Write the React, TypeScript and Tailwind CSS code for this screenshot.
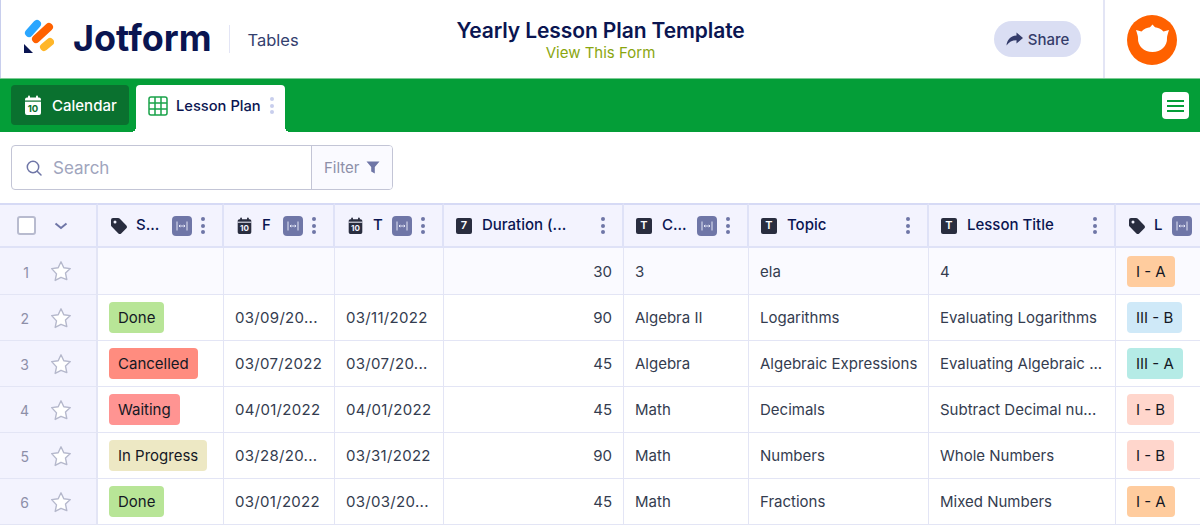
import React from 'react';

const font = '[font-family:Inter,"Liberation_Sans",sans-serif]';

function TableIcon() {
  return (
    <svg width="20" height="20" viewBox="0 0 20 20" fill="#fff" stroke="#1aa34a" strokeWidth="1.5">
      <rect x="1" y="1" width="18" height="18" rx="2" />
      <path d="M1 7h18M1 13h18M7 1v18M13 1v18" />
    </svg>
  );
}

function CalIcon({ size, bg, fg }: { size: number; bg: string; fg: string }) {
  return (
    <svg width={size} height={size} viewBox="0 0 20 20">
      <path d="M2 4.500a2 2 0 0 1 2-2h12a2 2 0 0 1 2 2V18a2 2 0 0 1-2 2H4a2 2 0 0 1-2-2z" fill={bg} />
      <rect x="5" y="0.500" width="2" height="4" rx="1" fill={bg} />
      <rect x="13" y="0.500" width="2" height="4" rx="1" fill={bg} />
      <rect x="2" y="5.500" width="16" height="1.200" fill={fg} />
      <text x="10" y="17" textAnchor="middle" fontSize="9.500" fontWeight="700" fontFamily="Inter, sans-serif" fill={fg}>10</text>
    </svg>
  );
}

function TagIcon() {
  return (
    <svg width="18" height="18" viewBox="0 0 18 18">
      <path d="M1 3a2 2 0 0 1 2-2h5.200a2 2 0 0 1 1.400.6l6.800 6.800a2 2 0 0 1 0 2.800l-5.200 5.200a2 2 0 0 1-2.800 0L1.600 9.600A2 2 0 0 1 1 8.200z" fill="#292d3f" />
      <circle cx="5" cy="5" r="1.500" fill="#f3f3fe" />
    </svg>
  );
}

function TypeIcon({ label }: { label: string }) {
  return (
    <span className="flex h-[16px] w-[16px] shrink-0 items-center justify-center rounded-[2px] bg-[#292d3f] text-[11px] font-semibold leading-none text-white">
      {label}
    </span>
  );
}

function Fit() {
  return (
    <span className="flex h-5 w-5 shrink-0 items-center justify-center rounded-[4px] bg-[#6f76a7]">
      <svg width="12" height="10" viewBox="0 0 12 10" fill="none" stroke="#e3e5f5" strokeWidth="1">
        <path d="M1 0.500v9M11 0.500v9M3.200 5h5.600" />
        <path d="M4.200 3.800 3 5l1.200 1.200M7.800 3.800 9 5 7.800 6.200" />
      </svg>
    </span>
  );
}

function Dots({ color = 'bg-[#6f76a7]' }: { color?: string }) {
  return (
    <span className="flex shrink-0 flex-col gap-[2.5px]">
      <i className={`h-1 w-1 rounded-full ${color}`} />
      <i className={`h-1 w-1 rounded-full ${color}`} />
      <i className={`h-1 w-1 rounded-full ${color}`} />
    </span>
  );
}

function Star() {
  return (
    <svg width="22" height="22" viewBox="0 0 22 22" fill="#fff" stroke="#b5b8cc" strokeWidth="1.4" strokeLinejoin="round">
      <path d="M11 1.800l2.800 6 6.500.8-4.800 4.500 1.300 6.500L11 17.300l-5.800 3.100 1.300-6.500L1.700 8.600l6.500-.8z" />
    </svg>
  );
}

const heads = [
  { icon: <TagIcon />, label: 'S...', fit: true },
  { icon: <CalIcon size={17} bg="#292d3f" fg="#f3f3fe" />, label: 'F', fit: true },
  { icon: <CalIcon size={17} bg="#292d3f" fg="#f3f3fe" />, label: 'T', fit: true },
  { icon: <TypeIcon label="7" />, label: 'Duration (...', fit: false },
  { icon: <TypeIcon label="T" />, label: 'C...', fit: true },
  { icon: <TypeIcon label="T" />, label: 'Topic', fit: false },
  { icon: <TypeIcon label="T" />, label: 'Lesson Title', fit: false },
  { icon: <TagIcon />, label: 'L', fit: true },
];

type Row = {
  n: number;
  status?: [string, string];
  from: string;
  to: string;
  dur: number;
  course: string;
  topic: string;
  title: string;
  level: [string, string];
};

const rows: Row[] = [
  { n: 1, from: '', to: '', dur: 30, course: '3', topic: 'ela', title: '4', level: ['I - A', 'bg-[#ffcc9e]'] },
  { n: 2, status: ['Done', 'bg-[#b8e597]'], from: '03/09/20...', to: '03/11/2022', dur: 90, course: 'Algebra II', topic: 'Logarithms', title: 'Evaluating Logarithms', level: ['III - B', 'bg-[#cfe9f8]'] },
  { n: 3, status: ['Cancelled', 'bg-[#ff8c7f]'], from: '03/07/2022', to: '03/07/20...', dur: 45, course: 'Algebra', topic: 'Algebraic Expressions', title: 'Evaluating Algebraic ...', level: ['III - A', 'bg-[#b5ebe6]'] },
  { n: 4, status: ['Waiting', 'bg-[#ff9492]'], from: '04/01/2022', to: '04/01/2022', dur: 45, course: 'Math', topic: 'Decimals', title: 'Subtract Decimal nu...', level: ['I - B', 'bg-[#ffd6cc]'] },
  { n: 5, status: ['In Progress', 'bg-[#ede8c4]'], from: '03/28/20...', to: '03/31/2022', dur: 90, course: 'Math', topic: 'Numbers', title: 'Whole Numbers', level: ['I - B', 'bg-[#ffd6cc]'] },
  { n: 6, status: ['Done', 'bg-[#b8e597]'], from: '03/01/2022', to: '03/03/20...', dur: 45, course: 'Math', topic: 'Fractions', title: 'Mixed Numbers', level: ['I - A', 'bg-[#ffcc9e]'] },
];

function Pill({ text, bg }: { text: string; bg: string }) {
  return <span className={`-mt-[2px] rounded-[4px] px-[9px] py-[6px] text-[15px] leading-[19px] whitespace-nowrap text-[#141824] ${bg}`}>{text}</span>;
}

function Cell({ children, className = '' }: { children?: React.ReactNode; className?: string }) {
  return (
    <div className={`flex items-center overflow-hidden border-r border-[#e3e5f5] px-[11px] pt-[2px] whitespace-nowrap ${className}`}>
      {children}
    </div>
  );
}

export default function App() {
  return (
    <div className={`h-[525px] w-[1200px] overflow-hidden bg-white text-[#343c6a] ${font}`}>
      <header className="flex h-[78px] border-l border-[#c8ceed] bg-white">
        <div className="flex w-[320px] items-center pl-[21px]">
          <svg width="32" height="36" viewBox="0 0 32 36" className="-mt-[6px] shrink-0" fill="none" strokeWidth="8" strokeLinecap="round">
            <path d="M7 15 15 6" stroke="#2aa6ff" />
            <path d="M14 21 27 9" stroke="#ff6100" />
            <path d="M22 29 28 24" stroke="#ffb629" />
            <path d="M2 26 11 35H2z" fill="#0a1551" />
          </svg>
          <span className="ml-[19px] pb-[2px] text-[36px] leading-none font-bold text-[#0a1551]">Jotform</span>
          <span className="ml-[17px] h-7 w-px bg-[#e3e5f5]" />
          <span className="ml-[18px] pt-[2px] text-[16.5px] text-[#33406e]">Tables</span>
        </div>
        <div className="flex flex-1 flex-col items-center pt-[17px] pr-[114px]">
          <span className="text-[21px] leading-[27px] font-semibold tracking-[-0.1px] text-[#0a1551]">Yearly Lesson Plan Template</span>
          <span className="text-[15px] leading-[17px] text-[#8aa60f]">View This Form</span>
        </div>
        <div className="flex w-[109px] items-center">
          <button className="flex h-[36px] w-[87px] items-center justify-center gap-[5px] rounded-full bg-[#dadef3] text-[15px] font-medium text-[#343c6a]">
            <svg width="17" height="14" viewBox="0 0 17 14" fill="#343c6a">
              <path d="M10.500 0.500 17 6l-6.500 5.500V8.200C6 8.200 3 9.800 0.500 13.500 1 8.400 4 4 10.500 3.600z" />
            </svg>
            <span className="pt-[2px]">Share</span>
          </button>
        </div>
        <div className="flex w-[97px] items-center justify-center border-l-2 border-[#e3e5f5] pt-[2px] pr-px">
          <svg width="50" height="50" viewBox="0 0 50 50">
            <circle cx="25" cy="25" r="25" fill="#ff6100" />
            <path d="M9 15l5.500 1.500C17 14 20 12.800 23 12.300L25.500 9.500 28 12.300C31 12.800 34 14 36.500 16.500L42 15C41 18 40 21 40 23C40.500 31 34 37 25.500 37C17 37 10.500 31 11 23C11 21 10 18 9 15z" fill="#fff" />
          </svg>
        </div>
      </header>

      <nav className="flex h-[54px] items-end justify-between border-t border-[#7fcb96] bg-[#049e38] pl-[11px] pr-[11px]">
        <div className="flex h-full items-start gap-[7px] pt-[6px]">
          <div className="flex h-[40px] w-[118px] items-center gap-[9px] rounded-[4px] bg-[#0a712f] pl-[12px] text-[15px] font-medium text-white">
            <CalIcon size={20} bg="#fff" fg="#0a712f" />
            <span className="pt-[2px]">Calendar</span>
          </div>
          <div className="relative flex h-[47px] w-[149px] items-center rounded-t-[4px] bg-white pb-[6px] pl-[12px] text-[14.7px] font-medium text-[#0a1551]">
            {/* concave feet at the tab's bottom corners */}
            <span className="absolute bottom-0 -left-[5px] h-[5px] w-[5px] bg-[radial-gradient(circle_at_0_0,#049e38_5px,#fff_5px)]" />
            <span className="absolute -right-[5px] bottom-0 h-[5px] w-[5px] bg-[radial-gradient(circle_at_100%_0,#049e38_5px,#fff_5px)]" />
            <TableIcon />
            <span className="ml-[8px] pt-[2px]">Lesson Plan</span>
            <span className="ml-[9px]"><Dots color="bg-[#c8ceed]" /></span>
          </div>
        </div>
        <button className="mb-[13px] flex h-[27px] w-[27px] flex-col items-center justify-center gap-[3px] rounded-[4px] bg-white">
          <i className="h-[2px] w-[17px] bg-[#049e38]" />
          <i className="h-[2px] w-[17px] bg-[#049e38]" />
          <i className="h-[2px] w-[17px] bg-[#049e38]" />
        </button>
      </nav>

      <div className="flex h-[71px] items-start pt-[13px] pl-[11px]">
        <div className="flex h-[45px] w-[382px] overflow-hidden rounded-[4px] border border-[#c3c5d6]">
          <div className="flex w-[299px] items-center gap-[11px] pl-[14px]">
            <svg width="16" height="16" viewBox="0 0 16 16" fill="none" stroke="#6f76a7" strokeWidth="1.500">
              <circle cx="7" cy="7" r="5.700" />
              <path d="M11.200 11.200 15 15" strokeLinecap="round" />
            </svg>
            <span className="pt-[2px] text-[17px] text-[#a0a5bd]">Search</span>
          </div>
          <div className="flex flex-1 items-center gap-[6px] border-l border-[#c3c5d6] bg-[#fafaff] pl-[12px] text-[15px] text-[#8d8fa8]">
            <span className="pt-[2px]">Filter</span>
            <svg width="14" height="13" viewBox="0 0 14 13" fill="#6f76a7">
              <path d="M0.500 0.500h13L8.800 6v6.500L5.200 10.500V6z" />
            </svg>
          </div>
        </div>
      </div>

      <div className="grid grid-cols-[98px_126px_111px_109px_180px_125px_180px_187px_108px] grid-rows-[45px_47px_46px_46px_46px_46px_46px] text-[15px] text-[#343c4f]">
        {/* header row */}
        <div className="flex items-center border-y-2 border-r-2 border-[#dfe2f7] border-t-[#d6daf5] bg-[#f3f3fe] pl-[17px]">
          <span className="h-[19px] w-[19px] rounded-[3px] border-2 border-[#b8bbcf] bg-white" />
          <svg width="14" height="8" viewBox="0 0 14 8" className="ml-[18px]" fill="none" stroke="#6f76a7" strokeWidth="2">
            <path d="M1.500 1.500 7 6l5.500-4.500" />
          </svg>
        </div>
        {heads.map((h, i) => (
          <div key={i} className="flex items-center overflow-hidden border-y-2 border-r-2 border-[#dfe2f7] border-t-[#d6daf5] bg-[#f3f3fe] pl-[12px] text-[15px] font-medium text-[#0a1551]">
            <span className="flex w-[26px] shrink-0 justify-start">{h.icon}</span>
            <span className="flex-1 whitespace-nowrap">{h.label}</span>
            {h.fit && <Fit />}
            <span className="mr-[17px] ml-[9px]"><Dots /></span>
          </div>
        ))}
        {/* body */}
        {rows.map((r) => (
          <React.Fragment key={r.n}>
            <div className="flex items-center border-r-2 border-b border-[#e3e5f5] bg-[#f3f3fe] text-[#8d8fa8]">
              <span className="w-[50px] pt-[2px] pr-[21px] text-right text-[14px]">{r.n}</span>
              <Star />
            </div>
            {[
              r.status ? <Pill text={r.status[0]} bg={r.status[1]} /> : null,
              <span className="tracking-[0.3px]">{r.from}</span>,
              <span className="tracking-[0.3px]">{r.to}</span>,
              <span className="w-full text-right">{r.dur}</span>,
              r.course,
              r.topic,
              r.title,
              <Pill text={r.level[0]} bg={r.level[1]} />,
            ].map((c, j) => (
              <Cell key={j} className={`border-b ${r.n === 1 ? 'bg-[#fafaff]' : 'bg-white'}`}>
                {c}
              </Cell>
            ))}
          </React.Fragment>
        ))}
      </div>
    </div>
  );
}
